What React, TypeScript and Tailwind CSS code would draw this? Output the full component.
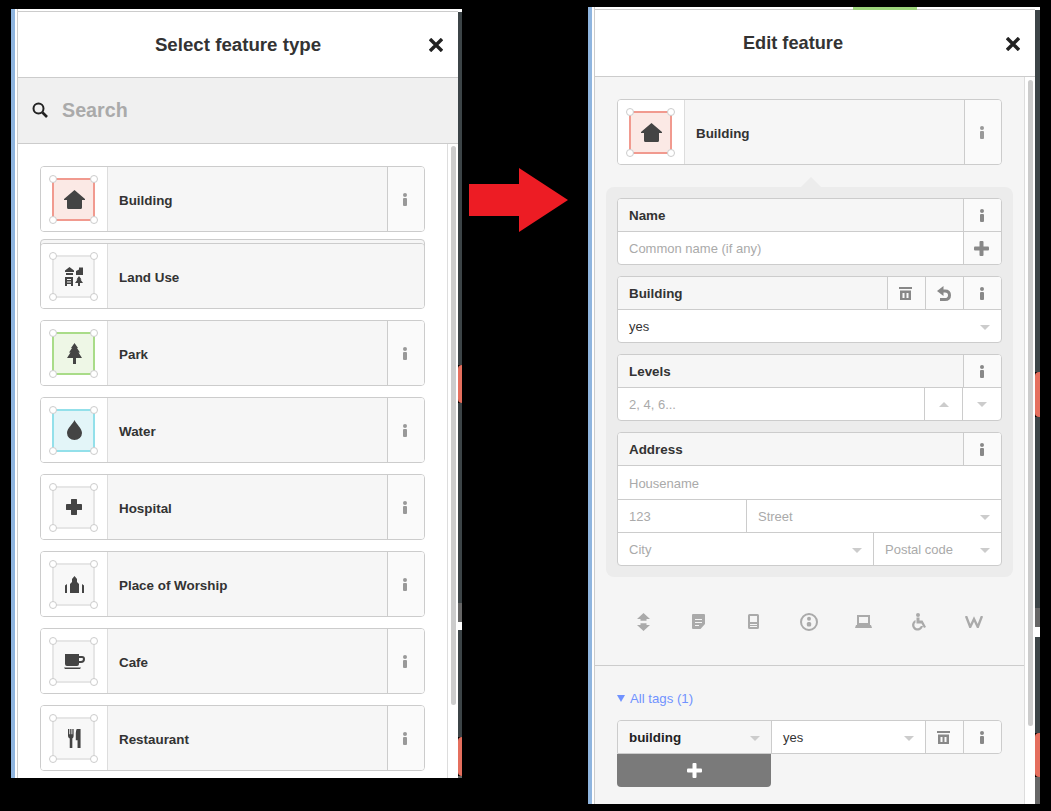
import type { ReactNode } from "react";

type Tint = { box: string };

const FONT = "font-['Liberation_Sans',Arial,sans-serif]";

const TINTS: Record<string, Tint> = {
  red: { box: "bg-[#fbe9e5] border-[#f19a8f]" },
  green: { box: "bg-[#eef7e6] border-[#a9dc88]" },
  blue: { box: "bg-[#e3f5f8] border-[#93e0ea]" },
  gray: { box: "bg-[#f8f8f8] border-[#e6e6e6]" },
};

function HouseIcon() {
  return (
    <svg width="21" height="19" viewBox="0 0 21 19" fill="#444">
      <path d="M10.5 0 L21 9 V10 H18 V17.5 Q18 19 16.5 19 H4.5 Q3 19 3 17.5 V10 H0 V9 Z" />
    </svg>
  );
}

function LandUseIcon() {
  return (
    <svg width="18" height="19" viewBox="0 0 18 19" fill="#444">
      <path d="M4.5 0 L9 3.5 V5 H0 V3.5 Z M1 6 H8 V8 H1 Z" />
      <path d="M11 4 L14 2.5 V0.5 H18 V8 H11 Z" />
      <path fillRule="evenodd" d="M0 10 H8 V19 H6 V17 H2 V19 H0 Z M2 12 V13 H6 V12 Z M2 14.5 V15.5 H6 V14.5 Z" />
      <path d="M14 9 L16.5 12.5 H15.5 L18 16 H15 V19 H13 V16 H10 L12.5 12.5 H11.5 Z" />
    </svg>
  );
}

function TreeIcon() {
  return (
    <svg width="15" height="21" viewBox="0 0 15 21" fill="#444">
      <path d="M7.5 0 L11 5 H10 L13 9.5 H11.5 L15 15 H9 V21 H6 V15 H0 L3.5 9.5 H2 L5 5 H4 Z" />
    </svg>
  );
}

function DropIcon() {
  return (
    <svg width="15" height="20" viewBox="0 0 15 20" fill="#444">
      <path d="M7.5 0 C9 4 15 8 15 13 A7.5 7 0 0 1 0 13 C0 8 6 4 7.5 0 Z" />
    </svg>
  );
}

function CrossIcon() {
  return (
    <svg width="16" height="16" viewBox="0 0 16 16" fill="#444">
      <path d="M5.5 0 H10.5 Q11 0 11 1 V5 H15 Q16 5 16 5.5 V10.5 Q16 11 15 11 H11 V15 Q11 16 10.5 16 H5.5 Q5 16 5 15 V11 H1 Q0 11 0 10.5 V5.5 Q0 5 1 5 H5 V1 Q5 0 5.5 0 Z" />
    </svg>
  );
}

function WorshipIcon() {
  return (
    <svg width="19" height="17" viewBox="0 0 19 17" fill="#444">
      <path d="M9.5 0 L12 3 V6 L14 8 V17 H5 V8 L7 6 V3 Z" />
      <path d="M0 9.5 L2 8 V17 H0 Z M17 8 L19 9.5 V17 H17 Z" />
    </svg>
  );
}

function CupIcon() {
  return (
    <svg width="21" height="15" viewBox="0 0 21 15" fill="#444">
      <path fillRule="evenodd" d="M1 0 H15 V2 H18 Q21 2 21 5 Q21 9 17 9 H15 V10 Q15 12 13 12 H3 Q1 12 1 10 Z M15 4 V7 H17 Q19 7 19 5 Q19 4 18 4 Z" />
      <path d="M0 13.5 H17 L16 15 H1 Z" />
    </svg>
  );
}

function ForkIcon() {
  return (
    <svg width="13" height="21" viewBox="0 0 15 22" fill="#444">
      <path d="M0 0 H1.5 V6 H2.5 V0 H4 V6 H5 V0 H6.5 V8 Q6.5 10 5 11 V22 H2 V11 Q0 10 0 8 Z" />
      <path d="M10 0 H14.5 V22 H11 V13 H9 V5 Q9 2 10 0 Z" />
    </svg>
  );
}

function InfoIcon({ color = "#999" }: { color?: string }) {
  return (
    <svg width="6" height="13" viewBox="0 0 6 13" fill={color}>
      <circle cx="3" cy="2" r="2" />
      <rect x="1" y="5" width="4" height="8" rx="1" />
    </svg>
  );
}

function TrashIcon() {
  return (
    <svg width="13" height="13" viewBox="0 0 13 13" fill="#888">
      <path d="M0 0 H13 V2 H0 Z" />
      <path fillRule="evenodd" d="M1 3.5 H12 V13 H1 Z M3.5 6 V11 H5.5 V6 Z M7.5 6 V11 H9.5 V6 Z" />
    </svg>
  );
}

function UndoIcon() {
  return (
    <svg width="14" height="15" viewBox="0 0 14 15">
      <path d="M5 5 H8 Q12.5 5 12.5 9.2 Q12.5 13.5 8 13.5 H3" fill="none" stroke="#888" strokeWidth="3" />
      <path d="M6.5 0 V10 L0 5 Z" fill="#888" />
    </svg>
  );
}

function PlusIcon({ color = "#888" }: { color?: string }) {
  return (
    <svg width="15" height="15" viewBox="0 0 15 15" fill={color}>
      <rect x="5.5" y="0" width="4" height="15" rx="1" />
      <rect x="0" y="5.5" width="15" height="4" rx="1" />
    </svg>
  );
}

function CloseIcon() {
  return (
    <svg width="14" height="14" viewBox="0 0 14 14" stroke="#222" strokeWidth="3.4" fill="none">
      <path d="M1 1 L13 13 M13 1 L1 13" />
    </svg>
  );
}

function SearchIcon() {
  return (
    <svg width="16" height="16" viewBox="0 0 16 16" fill="none" stroke="#222">
      <circle cx="6.5" cy="6.5" r="5" strokeWidth="2" />
      <path d="M10.5 10.5 L15 15" strokeWidth="2.6" />
    </svg>
  );
}

function Caret({ up = false, color = "#ccc" }: { up?: boolean; color?: string }) {
  return (
    <svg width="10" height="5" viewBox="0 0 10 5" fill={color}>
      <path d={up ? "M5 0 L10 5 H0 Z" : "M0 0 H10 L5 5 Z"} />
    </svg>
  );
}

function Handle({ className }: { className: string }) {
  return <span className={`absolute w-[8px] h-[8px] rounded-full bg-white border border-[#ccc] ${className}`} />;
}

function PresetSquare({ tint, children }: { tint: string; children: ReactNode }) {
  return (
    <div className={`relative w-[43px] h-[43px] border-2 pl-[1px] flex items-center justify-center ${TINTS[tint].box}`}>
      {children}
      <Handle className="-top-[5px] -left-[5px]" />
      <Handle className="-top-[5px] -right-[5px]" />
      <Handle className="-bottom-[5px] -left-[5px]" />
      <Handle className="-bottom-[5px] -right-[5px]" />
    </div>
  );
}

function PresetRow({ label, tint, icon, plain = false }: { label: string; tint: string; icon: ReactNode; plain?: boolean }) {
  return (
    <div className="flex h-[66px] rounded-[4px] border border-[#ccc] overflow-hidden">
      <div className="w-[67px] shrink-0 bg-white border-r border-[#ddd] pr-[1px] flex items-center justify-center">
        <PresetSquare tint={tint}>{icon}</PresetSquare>
      </div>
      <div className="flex-1 bg-[#f6f6f6] flex items-center pl-[11px] pt-[4px] text-[13.4px] font-bold text-[#333]">{label}</div>
      {!plain && (
        <div className="w-[37px] shrink-0 bg-[#fafafa] border-l border-[#ccc] pr-[2px] flex items-center justify-center">
          <InfoIcon />
        </div>
      )}
    </div>
  );
}

function FieldHead({ label, children }: { label: string; children?: ReactNode }) {
  return (
    <div className="flex h-[33px] bg-[#f6f6f6] border-b border-[#ccc]">
      <div className="flex-1 flex items-center pl-[11px] pt-[2px] text-[13.4px] font-bold text-[#333]">{label}</div>
      {children}
      <Cell>
        <InfoIcon color="#888" />
      </Cell>
    </div>
  );
}

function Cell({ children }: { children: ReactNode }) {
  return <div className="w-[38px] shrink-0 bg-[#fafafa] border-l border-[#ccc] pr-[2px] flex items-center justify-center">{children}</div>;
}

function Field({ children }: { children: ReactNode }) {
  return <div className="rounded-[4px] border border-[#ccc] overflow-hidden bg-white">{children}</div>;
}

function Input({ text, dark = false, caret = false, className = "h-[32px]" }: { text: string; dark?: boolean; caret?: boolean; className?: string }) {
  return (
    <div className={`flex items-center justify-between pl-[11px] pr-[11px] pt-[2px] text-[13px] ${dark ? "text-[#333]" : "text-[#aaa]"} ${className}`}>
      <span>{text}</span>
      {caret && <Caret />}
    </div>
  );
}

const RED = "bg-[#e56f5e] rounded-l-[4px]";
const DARK = "bg-[#3c4447]";
const GRAY = "bg-[#666]";

const STRIP_L = [
  `h-[353px] ${DARK}`,
  `h-[38px] ${RED}`,
  `h-[200px] ${DARK}`,
  `h-[19px] ${GRAY}`,
  "h-[8px] bg-white",
  `h-[107px] ${DARK}`,
  `h-[39px] ${RED}`,
  `h-[2px] ${GRAY}`,
];
const STRIP_R = [
  `h-[362px] ${DARK}`,
  `h-[45px] ${RED}`,
  `h-[191px] ${DARK}`,
  `h-[19px] ${GRAY}`,
  "h-[10px] bg-white",
  `h-[96px] ${DARK}`,
  `h-[44px] ${RED}`,
  `h-[27px] ${GRAY}`,
];

function Shell({ width, stripWidth, top, height, children, strip, topBar }: { width: string; stripWidth: string; top: string; height: string; children: ReactNode; strip: string[]; topBar?: boolean }) {
  return (
    <div className={`flex shrink-0 ${width} ${top} ${height}`}>
      <div className="w-[4px] bg-[#8fb5df]" />
      <div className="w-[2px] bg-white" />
      <div className="flex-1 flex flex-col min-w-0 bg-white border-l border-[#ccc]">
        <div className="h-[3px] shrink-0 border-b border-[#ccc] bg-white flex justify-end">
          {topBar && <div className="h-[3px] w-[64px] mr-[118px] bg-[#9dd57c]" />}
        </div>
        {children}
      </div>
      <div className={`flex flex-col overflow-hidden ${stripWidth}`}>
        <div className="h-[3px] shrink-0 bg-white" />
        {strip.map((c, i) => (
          <div key={i} className={c} />
        ))}
      </div>
    </div>
  );
}

function SelectPanel() {
  const rows = [
    { label: "Building", tint: "red", icon: <HouseIcon /> },
    { label: "Land Use", tint: "gray", icon: <LandUseIcon />, plain: true, stacked: true },
    { label: "Park", tint: "green", icon: <TreeIcon /> },
    { label: "Water", tint: "blue", icon: <DropIcon /> },
    { label: "Hospital", tint: "gray", icon: <CrossIcon /> },
    { label: "Place of Worship", tint: "gray", icon: <WorshipIcon /> },
    { label: "Cafe", tint: "gray", icon: <CupIcon /> },
    { label: "Restaurant", tint: "gray", icon: <ForkIcon /> },
  ];
  return (
    <Shell width="w-[451px]" stripWidth="w-[4px]" top="mt-[9px]" height="h-[769px]" strip={STRIP_L}>
      <div className="relative h-[66px] shrink-0 border-b border-[#ccc] pt-[2px] flex items-center justify-center text-[18.7px] font-bold text-[#333]">
        Select feature type
        <span className="absolute right-[15px] top-[26px] flex">
          <CloseIcon />
        </span>
      </div>
      <div className="h-[66px] shrink-0 bg-[#f0f0f0] border-b border-[#ccc] flex items-center pl-[14px] gap-[14px]">
        <span className="flex mb-[1px]">
          <SearchIcon />
        </span>
        <span className="text-[19.7px] font-bold text-[#aaa]">Search</span>
      </div>
      <div className="flex-1 flex min-h-0 overflow-hidden">
        <div className="flex-1 px-[22px] pt-[22px] flex flex-col gap-[11px]">
          {rows.map((r) => (
            <div key={r.label} className="relative">
              {r.stacked && (
                <div className="absolute -top-[4px] left-0 right-0 h-[8px] rounded-t-[4px] border border-[#ccc] bg-[#f6f6f6]" />
              )}
              <div className="relative">
                <PresetRow label={r.label} tint={r.tint} icon={r.icon} plain={r.plain} />
              </div>
            </div>
          ))}
        </div>
        <div className="w-[11px] shrink-0 border-l border-[#ddd] pl-[3px] pt-[2px]">
          <div className="w-[5px] h-[559px] rounded-full bg-[#ccc]" />
        </div>
      </div>
    </Shell>
  );
}

function ToolIcon({ children }: { children: ReactNode }) {
  return <div className="w-[55px] flex justify-center">{children}</div>;
}

function EditPanel() {
  return (
    <Shell width="w-[452px]" stripWidth="w-[5px]" top="mt-[7px]" height="h-[797px]" strip={STRIP_R} topBar>
      <div className="relative h-[67px] shrink-0 border-b border-[#ccc] flex items-center justify-center pt-[2px] pr-[44px] text-[18.2px] font-bold text-[#333]">
        Edit feature
        <span className="absolute right-[15px] top-[27px] flex">
          <CloseIcon />
        </span>
      </div>
      <div className="flex-1 flex min-h-0 overflow-hidden bg-[#f5f5f5]">
        <div className="flex-1 min-w-0 flex flex-col">
          <div className="px-[22px] pt-[22px]">
            <PresetRow label="Building" tint="red" icon={<HouseIcon />} />
          </div>
          <div className="relative mx-[11px] mt-[22px] rounded-[8px] bg-[#ececec] p-[11px] flex flex-col gap-[11px]">
            <span className="absolute -top-[10px] left-[195px] w-0 h-0 border-x-[10px] border-x-transparent border-b-[10px] border-b-[#ececec]" />
            <Field>
              <FieldHead label="Name" />
              <div className="flex h-[32px]">
                <Input text="Common name (if any)" className="flex-1" />
                <Cell>
                  <PlusIcon />
                </Cell>
              </div>
            </Field>
            <Field>
              <FieldHead label="Building">
                <Cell>
                  <TrashIcon />
                </Cell>
                <Cell>
                  <UndoIcon />
                </Cell>
              </FieldHead>
              <Input text="yes" dark caret />
            </Field>
            <Field>
              <FieldHead label="Levels" />
              <div className="flex h-[32px]">
                <Input text="2, 4, 6..." className="flex-1" />
                <div className="w-[38px] border-l border-[#ccc] flex items-center justify-center">
                  <Caret up />
                </div>
                <div className="w-[39px] border-l border-[#ccc] flex items-center justify-center">
                  <Caret />
                </div>
              </div>
            </Field>
            <Field>
              <FieldHead label="Address" />
              <Input text="Housename" className="h-[34px] border-b border-[#ccc]" />
              <div className="flex h-[33px] border-b border-[#ccc]">
                <Input text="123" className="w-[129px] border-r border-[#ccc]" />
                <Input text="Street" caret className="flex-1" />
              </div>
              <div className="flex h-[32px]">
                <Input text="City" caret className="w-[256px] border-r border-[#ccc]" />
                <Input text="Postal code" caret className="flex-1" />
              </div>
            </Field>
          </div>
          <div className="h-[89px] shrink-0 border-b border-[#ccc] flex items-center justify-start pl-[21px] pt-[1px]">
            <ToolIcon>
              <svg width="13" height="18" viewBox="0 0 13 18" fill="#aaa">
                <path d="M6.5 0 L13 6 H9.5 V7.8 H3.5 V6 H0 Z M3.5 10.2 H9.5 V12 H13 L6.5 18 L0 12 H3.5 Z" />
              </svg>
            </ToolIcon>
            <ToolIcon>
              <svg width="13" height="15" viewBox="0 0 13 15" fill="#aaa">
                <path fillRule="evenodd" d="M1 0 H12 Q13 0 13 1 V10 L8.5 15 H1 Q0 15 0 14 V1 Q0 0 1 0 Z M3 5 V6 H10 V5 Z M3 8 V9 H10 V8 Z M3 11 V12 H7 V11 Z" />
              </svg>
            </ToolIcon>
            <ToolIcon>
              <svg width="11" height="15" viewBox="0 0 11 15" fill="#aaa">
                <path fillRule="evenodd" d="M1.5 0 H9.5 Q11 0 11 1.5 V13.5 Q11 15 9.5 15 H1.5 Q0 15 0 13.5 V1.5 Q0 0 1.5 0 Z M2 2 V8 H9 V2 Z M2 10 V11 H9 V10 Z M2 12 V13 H9 V12 Z" />
              </svg>
            </ToolIcon>
            <ToolIcon>
              <svg width="18" height="18" viewBox="0 0 18 18" fill="#aaa">
                <path fillRule="evenodd" d="M9 0 A9 9 0 1 1 9 18 A9 9 0 1 1 9 0 Z M9 2 A7 7 0 1 0 9 16 A7 7 0 1 0 9 2 Z" />
                <circle cx="9" cy="5.8" r="2" />
                <rect x="6.8" y="9" width="4.4" height="4.5" rx="1.5" />
              </svg>
            </ToolIcon>
            <ToolIcon>
              <svg width="17" height="13" viewBox="0 0 17 13" fill="#aaa">
                <path fillRule="evenodd" d="M2 0 H15 V10 H2 Z M4 2 V8 H13 V2 Z" />
                <path d="M1 10 H16 L17 13 H0 Z" />
              </svg>
            </ToolIcon>
            <ToolIcon>
              <svg width="15" height="18" viewBox="0 0 15 18" fill="#aaa">
                <circle cx="7" cy="2" r="2" />
                <path d="M5.5 4.5 H8.5 V7.5 H11.5 L15 14 L13 15 L10.5 10.5 H5.5 Z" />
                <path d="M4.5 7 V9.5 A3.3 3.3 0 1 0 9.8 13 H12 A5.5 5.5 0 1 1 4.5 7 Z" />
              </svg>
            </ToolIcon>
            <ToolIcon>
              <svg width="18" height="12" viewBox="0 0 18 12" fill="none" stroke="#aaa" strokeWidth="2.4">
                <path d="M1 0 L5.2 11 L9 3 L12.8 11 L17 0" />
              </svg>
            </ToolIcon>
          </div>
          <div className="px-[22px] pt-[24px]">
            <div className="flex items-center gap-[5px] h-[17px] text-[13.2px] text-[#7092ff]">
              <svg width="8" height="7" viewBox="0 0 8 7" fill="#7092ff">
                <path d="M0 0 H8 L4 7 Z" />
              </svg>
              <span>All tags (1)</span>
            </div>
            <div className="mt-[13px] flex h-[34px] rounded-t-[4px] rounded-br-[4px] border border-[#ccc] overflow-hidden">
              <div className="w-[154px] bg-[#f6f6f6] border-r border-[#ccc] flex items-center justify-between pl-[11px] pr-[11px] pt-[2px] text-[13.4px] font-bold text-[#222]">
                <span>building</span>
                <Caret />
              </div>
              <div className="flex-1 bg-white flex items-center justify-between px-[11px] pt-[2px] text-[13px] text-[#333]">
                <span>yes</span>
                <Caret />
              </div>
              <Cell>
                <TrashIcon />
              </Cell>
              <Cell>
                <InfoIcon color="#888" />
              </Cell>
            </div>
            <div className="w-[154px] h-[33px] bg-[#7a7a7a] rounded-b-[4px] flex items-center justify-center">
              <PlusIcon color="#fff" />
            </div>
          </div>
        </div>
        <div className="w-[11px] shrink-0 border-l border-[#ddd] bg-white pl-[3px] pt-[3px]">
          <div className="w-[5px] h-[646px] rounded-full bg-[#ccc]" />
        </div>
      </div>
    </Shell>
  );
}

export default function App() {
  return (
    <div className={`h-[811px] overflow-hidden bg-black flex items-start pl-[11px] ${FONT}`}>
      <SelectPanel />
      <div className="w-[126px] shrink-0 pt-[168px] pl-[7px]">
        <svg width="99" height="64" viewBox="0 0 99 64" fill="#ed1c24">
          <path d="M0 16 H50 V0 L99 32 L50 64 V48 H0 Z" />
        </svg>
      </div>
      <EditPanel />
    </div>
  );
}
